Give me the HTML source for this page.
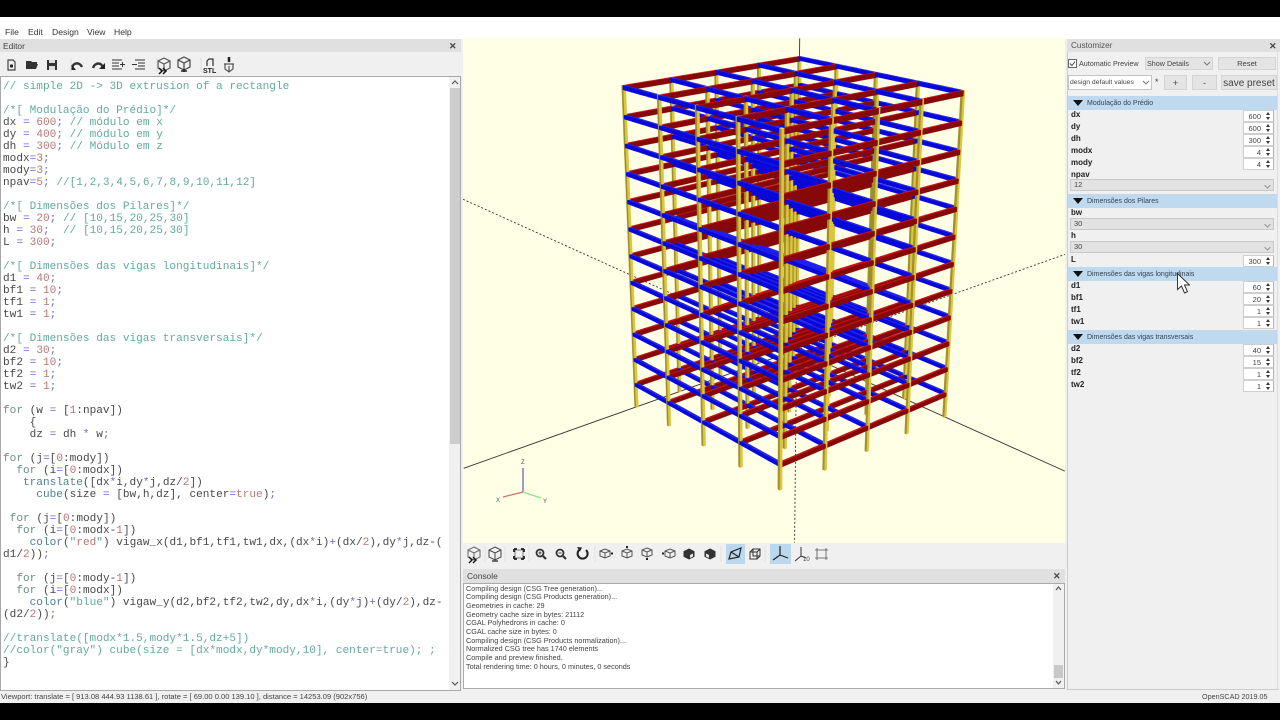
<!DOCTYPE html>
<html><head><meta charset="utf-8"><title>OpenSCAD</title>
<style>
html,body{margin:0;padding:0;background:#000;width:1280px;height:720px;overflow:hidden}
#r{position:relative;width:1280px;height:720px;overflow:hidden;background:#000;font-family:"Liberation Sans",sans-serif;color:#333;filter:blur(.3px)}
#r div,#r pre,#r svg{position:absolute;box-sizing:border-box}
.t{white-space:nowrap;line-height:10px;height:10px}
pre{margin:0;font:11.1px/12px "Liberation Mono",monospace;color:#484848}
pre i{font-style:normal;color:#62aa9e}
pre b{font-weight:normal;color:#b57878}
pre u{text-decoration:none;color:#6a6ad0}
pre s{text-decoration:none;color:#6b8f86}
pre em{font-style:normal;color:#4f8096}
.m{font-size:8.6px;top:26.500px;color:#333}
.l{font-size:8px;font-weight:bold;left:1071px;color:#222}
.sec{left:1068px;width:209px;height:14px;background:#bfd9ef}
.sect{left:1087px;font-size:7px;color:#345}
.tri{left:1073px;width:0;height:0;border-left:5px solid transparent;border-right:5px solid transparent;border-top:6px solid #111}
.sp{left:1243px;width:31px;height:12px;background:#fff;border:1px solid #cfcfcf;border-right:1px solid #b4b4b4}
.sp span{position:absolute;right:12px;top:1px;font-size:7.5px;line-height:9px;color:#444}
.sp:after{content:"";position:absolute;right:3px;top:1px;width:0;height:0;border-left:2.5px solid transparent;border-right:2.5px solid transparent;border-bottom:3px solid #333}
.sp:before{content:"";position:absolute;right:3px;bottom:1px;width:0;height:0;border-left:2.5px solid transparent;border-right:2.5px solid transparent;border-top:3px solid #333}
.cb{left:1070px;width:204px;height:12px;background:#e2e2e2;border:1px solid #c8c8c8;font-size:7.5px;line-height:10px;padding-left:3px;color:#444}
.cb:after{content:"";position:absolute;right:3px;top:3px;width:4px;height:4px;border-right:1px solid #888;border-bottom:1px solid #888;transform:rotate(45deg) scale(.9)}
.btn{background:#e4e4e4;border:1px solid #d4d4d4;text-align:center;color:#444}
.con{left:466px;font-size:7.26px;color:#444}
</style></head><body>
<div id="r">
<!-- top strip + menu -->
<div style="left:0;top:17px;width:1280px;height:22px;background:#fff"></div>
<div class="t m" style="left:5px">File</div>
<div class="t m" style="left:28px">Edit</div>
<div class="t m" style="left:52px">Design</div>
<div class="t m" style="left:87px">View</div>
<div class="t m" style="left:114px">Help</div>

<!-- main background -->
<div style="left:0;top:39px;width:1280px;height:664px;background:#f0f0f0"></div>

<!-- editor -->
<div style="left:0;top:39px;width:461px;height:13px;background:#e0e0e0"></div>
<div class="t" style="left:3px;top:41px;font-size:8.4px;color:#444">Editor</div>
<div class="t" style="left:449px;top:41px;font-size:9px;font-weight:bold;color:#444">✕</div>
<div style="left:0;top:76px;width:461px;height:615px;background:#fff;border:1px solid #a8a8a8"></div>
<div style="left:449px;top:77px;width:11px;height:613px;background:#f0f0f0"></div>
<div style="left:450px;top:88px;width:10px;height:356px;background:#cdcdcd"></div>
<svg style="left:449px;top:78px" width="12" height="10"><path d="M3 6l3-3 3 3" fill="none" stroke="#555" stroke-width="1.2"/></svg>
<svg style="left:449px;top:679px" width="12" height="10"><path d="M3 3l3 3 3-3" fill="none" stroke="#555" stroke-width="1.2"/></svg>

<pre style="left:3px;top:80.500px"><i>// simple 2D -&gt; 3D extrusion of a rectangle</i>

<i>/*[ Modulação do Prédio]*/</i>
dx <u>=</u> <b>600</b><u>;</u> <i>// módulo em x</i>
dy <u>=</u> <b>400</b><u>;</u> <i>// módulo em y</i>
dh <u>=</u> <b>300</b><u>;</u> <i>// Módulo em z</i>
modx<u>=</u><b>3</b><u>;</u>
mody<u>=</u><b>3</b><u>;</u>
npav<u>=</u><b>5</b><u>;</u> <i>//[1,2,3,4,5,6,7,8,9,10,11,12]</i>

<i>/*[ Dimensões dos Pilares]*/</i>
bw <u>=</u> <b>20</b><u>;</u> <i>// [10,15,20,25,30]</i>
h <u>=</u> <b>30</b><u>;</u>  <i>// [10,15,20,25,30]</i>
L <u>=</u> <b>300</b><u>;</u>

<i>/*[ Dimensões das vigas longitudinais]*/</i>
d1 <u>=</u> <b>40</b><u>;</u>
bf1 <u>=</u> <b>10</b><u>;</u>
tf1 <u>=</u> <b>1</b><u>;</u>
tw1 <u>=</u> <b>1</b><u>;</u>

<i>/*[ Dimensões das vigas transversais]*/</i>
d2 <u>=</u> <b>30</b><u>;</u>
bf2 <u>=</u> <b>10</b><u>;</u>
tf2 <u>=</u> <b>1</b><u>;</u>
tw2 <u>=</u> <b>1</b><u>;</u>

<s>for</s> (w <u>=</u> [<b>1</b>:npav])
    {
    dz <u>=</u> dh <u>*</u> w<u>;</u>

<s>for</s> (j<u>=</u>[<b>0</b>:mody])
  <s>for</s> (i<u>=</u>[<b>0</b>:modx])
   <em>translate</em>([dx<u>*</u>i,dy<u>*</u>j,dz/<b>2</b>])
     <em>cube</em>(size <u>=</u> [bw,h,dz], center<u>=</u><b>true</b>)<u>;</u>

 <s>for</s> (j<u>=</u>[<b>0</b>:mody])
  <s>for</s> (i<u>=</u>[<b>0</b>:modx-<b>1</b>])
    <em>color</em>(<i>"</i><b>red</b><i>"</i>) vigaw_x(d1,bf1,tf1,tw1,dx,(dx<u>*</u>i)<u>+</u>(dx/<b>2</b>),dy<u>*</u>j,dz-(
d1/<b>2</b>))<u>;</u>

  <s>for</s> (j<u>=</u>[<b>0</b>:mody-<b>1</b>])
  <s>for</s> (i<u>=</u>[<b>0</b>:modx])
    <em>color</em>(<i>"blue"</i>) vigaw_y(d2,bf2,tf2,tw2,dy,dx<u>*</u>i,(dy<u>*</u>j)<u>+</u>(dy/<b>2</b>),dz-
(d2/<b>2</b>))<u>;</u>

<i>//translate([modx*1.5,mody*1.5,dz+5])</i>
<i>//color("gray") cube(size = [dx*modx,dy*mody,10], center=true); ;</i>
}</pre>

<!-- editor toolbar -->
<svg style="left:0;top:52px" width="245" height="24" viewBox="0 52 245 24" fill="none" stroke="#333" stroke-width="1.2">
<path d="M8 60h5l2 2v8H8z" stroke="#444"/><circle cx="11.500" cy="66" r="1.600" fill="#222" stroke="none"/>
<path d="M26 61h5l1 1h5v2h-8l-3 5z M29 64h9l-2 5H26z" fill="#333" stroke="none"/>
<path d="M47 60h10v10H47z" fill="#333" stroke="none"/><path d="M49 60h6v3h-6z M49 66h6v4h-6z" fill="#ddd" stroke="none"/>
<path d="M72 68c1-6 8-6 10-1" stroke-width="2.400"/><path d="M71 64v6h5z" fill="#222" stroke="none"/>
<path d="M93 68c2-6 9-6 10 0" stroke-width="2.400"/><path d="M105 63v6h-6z" fill="#222" stroke="none"/>
<path d="M112 60h10M112 63h7M112 66h7M112 69h10M120 64.500h5M122.500 62v5" stroke-width="1"/>
<path d="M135 60h10M138 63h7M138 66h7M135 69h10M132 64.500h5" stroke-width="1"/>
<path d="M164 58l6 3v7l-6 3-6-3v-7zM158 61l6 3 6-3M164 64v7" stroke="#555"/><path d="M159 68l3 3-3 3M163 68l3 3-3 3" stroke="#111" stroke-width="1.500"/>
<path d="M184 57l6 3v7l-6 3-6-3v-7zM178 60l6 3 6-3M184 63v7" stroke="#444"/><path d="M181 71h6M184 69v3" stroke="#222" stroke-width="1.500"/>
<path d="M207 66v-5l2-2h4v7" stroke="#333"/>
<text x="203" y="73" font-size="7" font-weight="bold" font-family="Liberation Sans" fill="#222" stroke="none">STL</text>
<path d="M229 57v5" stroke="#222" stroke-width="2.500"/><path d="M224 64h10M225 64v5l4 3 4-3v-5M229 66v6" stroke="#555"/>
<path d="M71 58v14M157 58v14M201 58v14" stroke="#ddd" stroke-width="1"/>
</svg>

<!-- viewport -->
<svg id="v" style="left:463px;top:38px;background:#ffffe5" width="602" height="505" viewBox="463 38 602 505"></svg>

<!-- view toolbar -->
<div style="left:463px;top:543px;width:602px;height:25px;background:#f0f0f0"></div>
<div style="left:726px;top:544px;width:19px;height:20px;background:#bcd8ee"></div>
<div style="left:770px;top:544px;width:21px;height:20px;background:#bcd8ee"></div>
<svg style="left:463px;top:543px" width="380" height="24" viewBox="463 543 380 24" fill="none" stroke="#444" stroke-width="1">
<path d="M474 547l6 3v7l-6 3-6-3v-7zM468 550l6 3 6-3M474 553v7" stroke="#666"/><path d="M469 557l3 3-3 3M473 557l3 3-3 3" stroke="#111" stroke-width="1.400"/>
<path d="M495 547l6 3v7l-6 3-6-3v-7zM489 550l6 3 6-3M495 553v7"/><path d="M492 561h6" stroke-width="1.500"/>
<path d="M515 550l8 0 0 8-8 0z" stroke="#777"/><path d="M514 549h3M514 549v3M524 549h-3M524 549v3M514 559h3M514 559v-3M524 559h-3M524 559v-3" stroke="#222" stroke-width="1.800"/>
<circle cx="540" cy="553" r="3.500" stroke-width="1.800" stroke="#333"/><path d="M543 556l3 3" stroke-width="2.200" stroke="#333"/><path d="M538.500 553h3M540 551.500v3"/>
<circle cx="560" cy="553" r="3.500" stroke-width="1.800" stroke="#333"/><path d="M563 556l3 3" stroke-width="2.200" stroke="#333"/><path d="M558.500 553h3"/>
<path d="M586 550a5 5 0 1 1-6-.6" stroke="#222" stroke-width="2"/><path d="M577 547l5 .5-2 4z" fill="#222" stroke="none"/>
<g stroke="#555"><path d="M605 549l5 2v5l-5 2-5-2v-5zM600 551l5 2 5-2M605 553v5"/><path d="M611 553.500l2 0" stroke-width="2" stroke="#222"/></g>
<g stroke="#555"><path d="M627 549l5 2v5l-5 2-5-2v-5zM622 551l5 2 5-2M627 553v5"/><path d="M627 548v-2" stroke-width="2" stroke="#222"/></g>
<g stroke="#555"><path d="M647 548l5 2v5l-5 2-5-2v-5zM642 550l5 2 5-2M647 552v5"/><path d="M647 558v2" stroke-width="2" stroke="#222"/></g>
<g stroke="#555"><path d="M670 549l5 2v5l-5 2-5-2v-5zM665 551l5 2 5-2M670 553v5"/><path d="M664 553.500h-2" stroke-width="2" stroke="#222"/></g>
<path d="M689 549l5 2.500v5l-5 2.500-5-2.500v-5z" fill="#333" stroke="#333"/><path d="M690 555v3l3-1.500v-3z" fill="#e8e8e8" stroke="none"/>
<path d="M710 549l5 2.500v5l-5 2.500-5-2.500v-5z" fill="#333" stroke="#333"/><path d="M709 555v3l-3-1.500v-3z" fill="#e8e8e8" stroke="none"/>
<path d="M729 559l2-7 10-4-2 9-10 2zM731 552l8 5" stroke="#222" stroke-width="1.200"/>
<path d="M750 552h7v7h-7zM753 549h7v7h-7zM750 552l3-3M757 552l3-3M757 559l3-3" stroke="#333"/>
<path d="M780 546v9M780 555l-7 5M780 555l8 3" stroke="#222" stroke-width="1.200"/>
<path d="M801 547v9M801 556l-6 5M801 556l5 2" stroke="#333"/><text x="803" y="561" font-size="6" fill="#444" stroke="none" font-family="Liberation Sans">10</text>
<path d="M817 550h9v8h-9zM817 548v12M826 548v12M815 550h13M815 558h13" stroke="#555" stroke-width=".8"/>
<path d="M485 546v16M505 546v16M529 546v16M595 546v16M721 546v16M765 546v16" stroke="#e2e2e2"/>
</svg>

<!-- console -->
<div style="left:463px;top:569px;width:602px;height:14px;background:#e0e0e0"></div>
<div class="t" style="left:467px;top:571px;font-size:8.4px;color:#444">Console</div>
<div class="t" style="left:1053px;top:571px;font-size:9px;font-weight:bold;color:#444">✕</div>
<div style="left:463px;top:583px;width:602px;height:106px;background:#fff;border:1px solid #aaa"></div>
<div style="left:1053px;top:584px;width:11px;height:104px;background:#f0f0f0"></div>
<div style="left:1054px;top:665px;width:9px;height:13px;background:#c8c8c8"></div>
<svg style="left:1053px;top:585px" width="11" height="8"><path d="M3 5l2.500-3 2.500 3" fill="none" stroke="#555" stroke-width="1.200"/></svg>
<svg style="left:1053px;top:679px" width="11" height="8"><path d="M3 2l2.500 3 2.500-3" fill="none" stroke="#555" stroke-width="1.200"/></svg>
<div class="t con" style="top:583.500px">Compiling design (CSG Tree generation)...</div>
<div class="t con" style="top:592.200px">Compiling design (CSG Products generation)...</div>
<div class="t con" style="top:600.900px">Geometries in cache: 29</div>
<div class="t con" style="top:609.500px">Geometry cache size in bytes: 21112</div>
<div class="t con" style="top:618.200px">CGAL Polyhedrons in cache: 0</div>
<div class="t con" style="top:626.900px">CGAL cache size in bytes: 0</div>
<div class="t con" style="top:635.500px">Compiling design (CSG Products normalization)...</div>
<div class="t con" style="top:644.200px">Normalized CSG tree has 1740 elements</div>
<div class="t con" style="top:652.900px">Compile and preview finished.</div>
<div class="t con" style="top:661.500px">Total rendering time: 0 hours, 0 minutes, 0 seconds</div>

<!-- status -->
<div class="t" style="left:1px;top:692px;font-size:7.55px;color:#444">Viewport: translate = [ 913.08 444.93 1138.61 ], rotate = [ 69.00 0.00 139.10 ], distance = 14253.09 (902x756)</div>
<div class="t" style="left:1202px;top:692px;font-size:7.2px;color:#444">OpenSCAD 2019.05</div>

<!-- customizer -->
<div style="left:1067px;top:39px;width:213px;height:13px;background:#e0e0e0"></div>
<div class="t" style="left:1071px;top:41px;font-size:8.2px;color:#555">Customizer</div>
<div class="t" style="left:1269px;top:41px;font-size:9px;font-weight:bold;color:#444">✕</div>
<div style="left:1067px;top:52px;width:1px;height:638px;background:#ccc"></div>
<div style="left:1067px;top:689px;width:212px;height:1px;background:#ccc"></div>
<div style="left:1277px;top:52px;width:1px;height:638px;background:#ddd"></div>
<svg style="left:1068px;top:59px" width="10" height="10"><rect x=".5" y=".5" width="8" height="8" fill="#fff" stroke="#666"/><path d="M2 4.500l2 2 3-4" fill="none" stroke="#444"/></svg>
<div class="t" style="left:1079px;top:59px;font-size:7.2px;color:#444">Automatic Preview</div>
<div class="btn t" style="left:1145px;top:57px;width:68px;height:13px;font-size:7.2px;line-height:11px;text-align:left;padding-left:1px">Show Details</div>
<div class="btn t" style="left:1218px;top:57px;width:58px;height:13px;font-size:7.6px;line-height:12px">Reset</div>
<svg style="left:1203px;top:60px" width="9" height="7"><path d="M1 2l3 3 3-3" fill="none" stroke="#777"/></svg>
<div class="t" style="left:1068px;top:75px;width:84px;height:15px;background:#fff;border:1px solid #c4c4c4;font-size:6.8px;line-height:13px;padding-left:1px;color:#444">design default values</div>
<svg style="left:1142px;top:79px" width="9" height="7"><path d="M1 2l3 3 3-3" fill="none" stroke="#777"/></svg>
<div class="t" style="left:1155px;top:77px;font-size:9px;color:#444">*</div>
<div class="btn t" style="left:1164px;top:75px;width:23px;height:15px;font-size:9px;line-height:14px">+</div>
<div class="btn t" style="left:1192px;top:75px;width:25px;height:15px;font-size:9px;line-height:14px">-</div>
<div class="btn t" style="left:1221px;top:75px;width:56px;height:15px;font-size:10px;line-height:15px">save preset</div>

<div class="sec" style="top:96px"></div><div class="tri" style="top:100px"></div><div class="t sect" style="top:98.500px">Modulação do Prédio</div>
<div class="t l" style="top:110px">dx</div><div class="sp" style="top:110px"><span>600</span></div>
<div class="t l" style="top:122px">dy</div><div class="sp" style="top:122px"><span>600</span></div>
<div class="t l" style="top:134px">dh</div><div class="sp" style="top:134px"><span>300</span></div>
<div class="t l" style="top:146px">modx</div><div class="sp" style="top:146px"><span>4</span></div>
<div class="t l" style="top:158px">mody</div><div class="sp" style="top:158px"><span>4</span></div>
<div class="t l" style="top:170px">npav</div>
<div class="cb" style="top:179px">12</div>

<div class="sec" style="top:194px"></div><div class="tri" style="top:198px"></div><div class="t sect" style="top:196.500px">Dimensões dos Pilares</div>
<div class="t l" style="top:208px">bw</div>
<div class="cb" style="top:218px">30</div>
<div class="t l" style="top:231px">h</div>
<div class="cb" style="top:241px">30</div>
<div class="t l" style="top:255px">L</div><div class="sp" style="top:255px"><span>300</span></div>

<div class="sec" style="top:267px"></div><div class="tri" style="top:271px"></div><div class="t sect" style="top:269.500px">Dimensões das vigas longitudinais</div>
<div class="t l" style="top:281px">d1</div><div class="sp" style="top:281px"><span>60</span></div>
<div class="t l" style="top:293px">bf1</div><div class="sp" style="top:293px"><span>20</span></div>
<div class="t l" style="top:305px">tf1</div><div class="sp" style="top:305px"><span>1</span></div>
<div class="t l" style="top:317px">tw1</div><div class="sp" style="top:317px"><span>1</span></div>

<div class="sec" style="top:330px"></div><div class="tri" style="top:334px"></div><div class="t sect" style="top:332.500px">Dimensões das vigas transversais</div>
<div class="t l" style="top:344px">d2</div><div class="sp" style="top:344px"><span>40</span></div>
<div class="t l" style="top:356px">bf2</div><div class="sp" style="top:356px"><span>15</span></div>
<div class="t l" style="top:368px">tf2</div><div class="sp" style="top:368px"><span>1</span></div>
<div class="t l" style="top:380px">tw2</div><div class="sp" style="top:380px"><span>1</span></div>

<svg style="left:1174px;top:272px" width="16" height="24"><path d="M3.500 1.500v16l4-3.500 3 7 3-1.300-3-6.700h5z" fill="#fff" stroke="#333" stroke-width="1"/></svg>
</div>

<script>
(function(){
var cx=764,cy=290.5,f=1267,D=14253.09,tx=913.08,ty=444.93,tz=1138.61;
var rz=139.1*Math.PI/180,rx=69*Math.PI/180,c=Math.cos(rz),s=Math.sin(rz),cr=Math.cos(rx),sr=Math.sin(rx);
function P(x,y,z){x-=tx;y-=ty;z-=tz;var a=x*c+y*s,b=-x*s+y*c,e=b*cr+z*sr,g=-b*sr+z*cr,d=D-g;
 return [cx+f*a/d,cy-f*e/d,d];}
function pt(p){return p[0].toFixed(1)+" "+p[1].toFixed(1);}
var h=[];
/* axis clipped to the viewport rectangle */
function axis(dx,dy,dz,dash){
 var L=0,q=P(0,0,0),o=q,n;
 while(L<9000){L+=10;n=P(dx*L,dy*L,dz*L);
  if(n[0]<463||n[0]>1065||n[1]<38||n[1]>543)break;q=n;}
 h.push('<path d="M'+pt(o)+'L'+pt(q)+'" stroke="#333" stroke-width=".9"'+(dash?' stroke-dasharray="2 2"':'')+' fill="none"/>');
}
axis(1,0,0);axis(0,1,0);axis(0,0,1);axis(-1,0,0,1);axis(0,-1,0,1);axis(0,0,-1,1);
var B=[];
function box(x0,x1,y0,y1,z0,z1,cols){B.push({x0:x0,x1:x1,y0:y0,y1:y1,z0:z0,z1:z1,c:cols,
 d:P((x0+x1)/2,(y0+y1)/2,(z0+z1)/2)[2]});}
var YEL=["#a08e2c","#dcc63e","#f2e26a"],RED=["#600","#860808","#c41212"],BLU=["#0808d8","#00009c","#2222f0"];
var i,j,k,n,N=4;
for(k=0;k<12;k++){
 for(i=0;i<=4;i++)for(j=0;j<=4;j++)
  box(i*600-15,i*600+15,j*600-15,j*600+15,k*300,(k+1)*300,YEL);
 var z=(k+1)*300;
 for(j=0;j<=4;j++)for(i=0;i<4;i++)for(n=0;n<N;n++)
  box(i*600+n*150,i*600+(n+1)*150,j*600-10,j*600+10,z-56,z,RED);
 for(i=0;i<=4;i++)for(j=0;j<4;j++)for(n=0;n<N;n++)
  box(i*600-12,i*600+12,j*600+n*150,j*600+(n+1)*150,z-46,z,BLU);
}
B.sort(function(a,b){return b.d-a.d;});
function poly(a,b,c2,d,col){h.push('<path d="M'+pt(a)+'L'+pt(b)+'L'+pt(c2)+'L'+pt(d)+'Z" fill="'+col+'" stroke="'+col+'" stroke-width=".25"/>');}
B.forEach(function(b){
 var A=P(b.x1,b.y0,b.z0),C=P(b.x1,b.y1,b.z0),E=P(b.x1,b.y0,b.z1),G=P(b.x1,b.y1,b.z1),
     F=P(b.x0,b.y1,b.z0),H=P(b.x0,b.y1,b.z1),T=P(b.x0,b.y0,b.z1);
 poly(A,C,G,E,b.c[0]);   /* +x */
 poly(C,F,H,G,b.c[1]);   /* +y */
 poly(E,G,H,T,b.c[2]);   /* +z */
});
/* gizmo */
h.push('<path d="M523 492V468" stroke="#5858b8" stroke-width="1.200"/><path d="M523 492L503 497" stroke="#d07070" stroke-width="1.200"/><path d="M523 492L541 498" stroke="#8fe08f" stroke-width="1.200"/>');
h.push('<text x="521" y="464" font-size="6" fill="#555" font-family="Liberation Sans">Z</text><text x="496" y="502" font-size="6" fill="#555" font-family="Liberation Sans">X</text><text x="543" y="503" font-size="6" fill="#555" font-family="Liberation Sans">Y</text>');
document.getElementById("v").innerHTML=h.join("");
})();
</script>
</body></html>
